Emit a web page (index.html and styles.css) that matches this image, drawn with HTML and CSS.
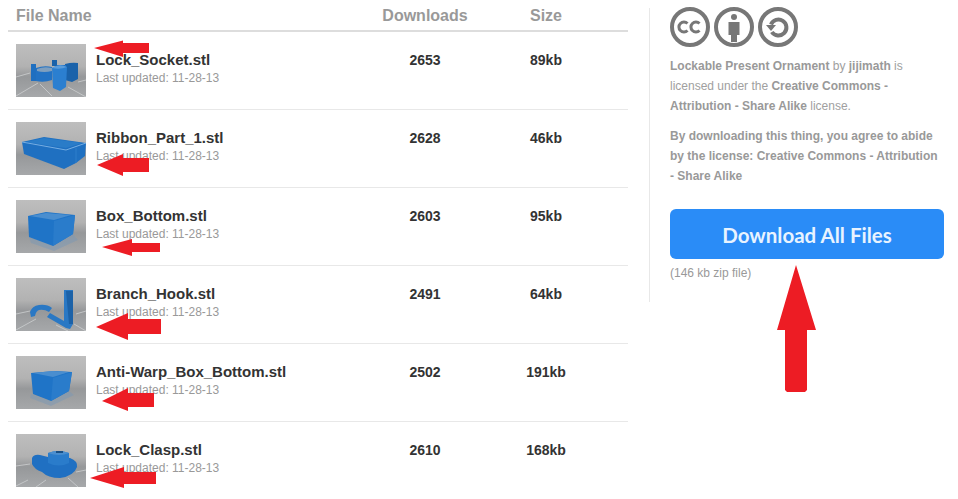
FILE: index.html
```html
<!DOCTYPE html>
<html lang="en">
<head>
<meta charset="utf-8">
<title>Thing Files</title>
<link rel="stylesheet" href="styles.css">
</head>
<body>
<svg class="defs" width="0" height="0" aria-hidden="true">
  <defs>
    <linearGradient id="bg" x1="0" y1="0" x2="0" y2="1">
      <stop offset="0" stop-color="#bebebe"/>
      <stop offset="0.42" stop-color="#b2b2b2"/>
      <stop offset="0.62" stop-color="#96989a"/>
      <stop offset="1" stop-color="#a6a8aa"/>
    </linearGradient>
  </defs>
</svg>
<div class="page">
  <section class="files">
    <div class="head">
      <div class="head-name">File Name</div>
      <div class="center">Downloads</div>
      <div class="center">Size</div>
    </div>

    <div class="row">
      <div class="file">
        <svg class="thumb" viewBox="0 0 70 53">
          <rect width="70" height="53" fill="url(#bg)"/>
          <path class="grid" d="M0 33 14 29M0 52 22 39M36 52 24 40M52 43 70 53M62 38 70 36"/>
          <path d="M15 20h5v17h-5z" fill="#1f6fc0"/>
          <path d="M20 24q8-3 16-1v13q-8 3-16 1z" fill="#2272c4"/>
          <path d="M21 25q7-3 15-1v3q-8 2-15 0z" fill="#7f9fbe"/>
          <path d="M36 16h5v6h-5z" fill="#1a62aa"/>
          <path d="M49 20q7-2 13-1v16l-6 3-7-2z" fill="#1a62aa"/>
          <path d="M41 21h9v4h-9z" fill="#2272c4"/>
          <path d="M36 24q7-5 15-1l-1 20-6 4-7-3z" fill="#2b7fd0"/>
          <path d="M36 24q7-5 15-1-7 3-15 1z" fill="#5a9cdb"/>
        </svg>
        <div class="meta">
          <div class="name">Lock_Socket.stl</div>
          <div class="updated">Last updated: 11-28-13</div>
        </div>
      </div>
      <div class="num">2653</div>
      <div class="num">89kb</div>
    </div>

    <div class="row">
      <div class="file">
        <svg class="thumb" viewBox="0 0 70 53">
          <rect width="70" height="53" fill="url(#bg)"/>
          <path d="M6 20 28 15 70 21 69 34 60 41 48 47 8 32z" fill="#1f70c1"/>
          <path d="M9 20 28 16 66 21 50 26z" fill="#2a7cc8"/>
          <path d="M6 20 50 28 70 21" stroke="#76aee2" stroke-width="1" fill="none"/>
          <path d="M60 26v15" stroke="#2f7ecb" stroke-width="1"/>
        </svg>
        <div class="meta">
          <div class="name">Ribbon_Part_1.stl</div>
          <div class="updated">Last updated: 11-28-13</div>
        </div>
      </div>
      <div class="num">2628</div>
      <div class="num">46kb</div>
    </div>

    <div class="row">
      <div class="file">
        <svg class="thumb" viewBox="0 0 70 53">
          <rect width="70" height="53" fill="url(#bg)"/>
          <path d="M13 37 37 46 57 34 62 40 38 51 15 43z" fill="#7f99b3" opacity=".55"/>
          <path d="M12 16 30 12 59 15 57 34 37 46 13 37z" fill="#1f74c7"/>
          <path d="M37 46 38 21 59 15 57 34z" fill="#2a7ccb"/>
          <path d="M14 16 30 13 55 15 38 20z" fill="#4a8ecf"/>
        </svg>
        <div class="meta">
          <div class="name">Box_Bottom.stl</div>
          <div class="updated">Last updated: 11-28-13</div>
        </div>
      </div>
      <div class="num">2603</div>
      <div class="num">95kb</div>
    </div>

    <div class="row">
      <div class="file">
        <svg class="thumb" viewBox="0 0 70 53">
          <rect width="70" height="53" fill="url(#bg)"/>
          <path class="grid" d="M0 36 14 33M0 52 20 41M40 47 52 53M60 36 70 33M58 46 70 53"/>
          <path d="M48 12h9v34l-3 5-4-1-19-11 3-4 14 8z" fill="#2a78c4"/>
          <path d="M50 13h7v33h-4z" fill="#1c62a8"/>
          <path d="M14 34q2-6 9-7 8-1 13 3l-3 4q-5-3-10-2-3 1-4 6l-4 1z" fill="#2a78c4"/>
        </svg>
        <div class="meta">
          <div class="name">Branch_Hook.stl</div>
          <div class="updated">Last updated: 11-28-13</div>
        </div>
      </div>
      <div class="num">2491</div>
      <div class="num">64kb</div>
    </div>

    <div class="row">
      <div class="file">
        <svg class="thumb" viewBox="0 0 70 53">
          <rect width="70" height="53" fill="url(#bg)"/>
          <path d="M15 38 35 45 53 35 58 39 35 50 14 42z" fill="#7f99b3" opacity=".55"/>
          <path d="M15 17 39 15 56 16 53 35 35 45 17 38z" fill="#1f74c7"/>
          <path d="M35 45 37 22 56 16 53 35z" fill="#2a7ccb"/>
          <path d="M17 17 37 15 53 16 37 21z" fill="#4a8ecf"/>
        </svg>
        <div class="meta">
          <div class="name">Anti-Warp_Box_Bottom.stl</div>
          <div class="updated">Last updated: 11-28-13</div>
        </div>
      </div>
      <div class="num">2502</div>
      <div class="num">191kb</div>
    </div>

    <div class="row">
      <div class="file">
        <svg class="thumb" viewBox="0 0 70 53">
          <rect width="70" height="53" fill="url(#bg)"/>
          <path class="grid" d="M0 32 14 30M0 52 12 46M30 46 20 53M60 38 70 36M52 44 62 53"/>
          <path d="M16 24Q18 20 24 21L32 23 54 24Q62 27 61 33 58 42 44 44 32 44 26 38 18 35 16 30z" fill="#2070c2"/>
          <path d="M32 19q10-4 21 0v10q-10 5-21 0z" fill="#2a7ccb"/>
          <path d="M32 19q10-4 21 0-10 4-21 0z" fill="#4a8ecf"/>
          <path d="M40 17h7v2h-7z" fill="#174f86"/>
        </svg>
        <div class="meta">
          <div class="name">Lock_Clasp.stl</div>
          <div class="updated">Last updated: 11-28-13</div>
        </div>
      </div>
      <div class="num">2610</div>
      <div class="num">168kb</div>
    </div>
  </section>

  <aside class="side">
    <div class="licenses">
      <svg class="cc" viewBox="0 0 40 40">
        <circle cx="20" cy="20" r="18" fill="#fff" stroke="#777" stroke-width="4"/>
        <path d="M17.500 16.500a5 5 0 1 0 0 7M29.500 16.500a5 5 0 1 0 0 7" fill="none" stroke="#777" stroke-width="3"/>
      </svg>
      <svg class="cc" viewBox="0 0 40 40">
        <circle cx="20" cy="20" r="18" fill="#fff" stroke="#777" stroke-width="4"/>
        <circle cx="20" cy="10" r="3" fill="#777"/>
        <path d="M14.500 15h11v13h-2.500v7h-6v-7h-2.500z" fill="#777"/>
      </svg>
      <svg class="cc" viewBox="0 0 40 40">
        <circle cx="20" cy="20" r="18" fill="#fff" stroke="#777" stroke-width="4"/>
        <path d="M13 17.500a8 8 0 1 1 .8 7.500" fill="none" stroke="#777" stroke-width="4"/>
        <path d="M8 18h10l-5 6z" fill="#777"/>
      </svg>
    </div>
    <p class="text"><b>Lockable Present Ornament</b> by <b>jijimath</b> is licensed under the <b>Creative Commons - Attribution - Share Alike</b> license.</p>
    <p class="text"><b>By downloading this thing, you agree to abide by the license: Creative Commons - Attribution - Share Alike</b></p>
    <a class="btn" href="#">Download All Files</a>
    <div class="zip">(146 kb zip file)</div>
  </aside>
</div>

<svg class="arrows" viewBox="0 0 958 499" aria-hidden="true">
  <polygon points="94,48 123,40.500 123,43 149,43 149,53 123,53 123,57"/>
  <polygon points="97,165 123,154 123,158 149,158 149,172 123,172 123,176"/>
  <polygon points="102,247 132,239 132,243 160,243 160,252 132,252 132,256"/>
  <polygon points="96,327 128,313 128,319 161,319 161,334 128,334 128,340"/>
  <polygon points="102,401 128,388 128,393 154,393 154,407 128,407 128,411"/>
  <polygon points="90,478 124,467 124,472 156,472 156,484 124,484 124,488"/>
  <polygon points="796,265 816,330 807,330 807,390 805,392 787,392 785,390 785,330 777,330"/>
</svg>
</body>
</html>
```
FILE: styles.css
```css
* { box-sizing: border-box; }
html, body { margin: 0; height: 100%; background: #fff; overflow: hidden; }
body { font-family: "Liberation Sans", Arial, sans-serif; position: relative; }
.defs { position: absolute; }
.page { display: flex; align-items: flex-start; padding-left: 8px; }
.files { width: 620px; flex: none; }
.head {
  display: grid;
  grid-template-columns: 349px 120px 122px;
  padding-left: 8px;
  height: 32px;
  border-bottom: 2px solid #ddd;
  font-size: 16px;
  font-weight: bold;
  line-height: 32px;
  color: #999;
}
.center { text-align: center; }
.row {
  display: grid;
  grid-template-columns: 349px 120px 122px;
  padding: 12px 0 0 8px;
  height: 78px;
  border-bottom: 1px solid #e8e8e8;
}
.row:last-child { border-bottom: 0; }
.file { display: flex; gap: 10px; }
.thumb { width: 70px; height: 53px; flex: none; display: block; }
.thumb path { filter: blur(.5px); }
.thumb .grid { fill: none; stroke: #cdcfd1; stroke-width: .8; }
.meta { padding-top: 7px; }
.name { font-size: 15px; line-height: 18px; font-weight: bold; color: #333; }
.updated { font-size: 12px; line-height: 18px; color: #999; }
.num { padding-top: 7px; font-size: 14px; line-height: 18px; font-weight: bold; color: #333; text-align: center; }
.side {
  margin: 8px 0 0 21px;
  padding-left: 20px;
  width: 295px;
  height: 294px;
  border-left: 1px solid #e8e8e8;
}
.licenses { display: flex; gap: 4px; margin-top: -1px; }
.cc { width: 40px; height: 40px; display: block; }
.text { margin: 9px 0 0; font-size: 12px; line-height: 20px; color: #a0a0a0; }
.text b { color: #999; }
.text + .text { margin-top: 10px; }
.btn {
  display: block;
  height: 50px;
  margin-top: 23px;
  padding-top: 1px;
  border-radius: 6px;
  background: #2a8cf7;
  color: #e8f3ff;
  font-family: Lato, sans-serif;
  font-size: 20.500px;
  font-weight: bold;
  line-height: 50px;
  text-align: center;
  text-decoration: none;
}
.zip { margin-top: 6px; font-size: 12px; line-height: 16px; color: #999; }
.arrows { position: absolute; left: 0; top: 0; width: 958px; height: 499px; fill: #ed1c24; pointer-events: none; }
```
